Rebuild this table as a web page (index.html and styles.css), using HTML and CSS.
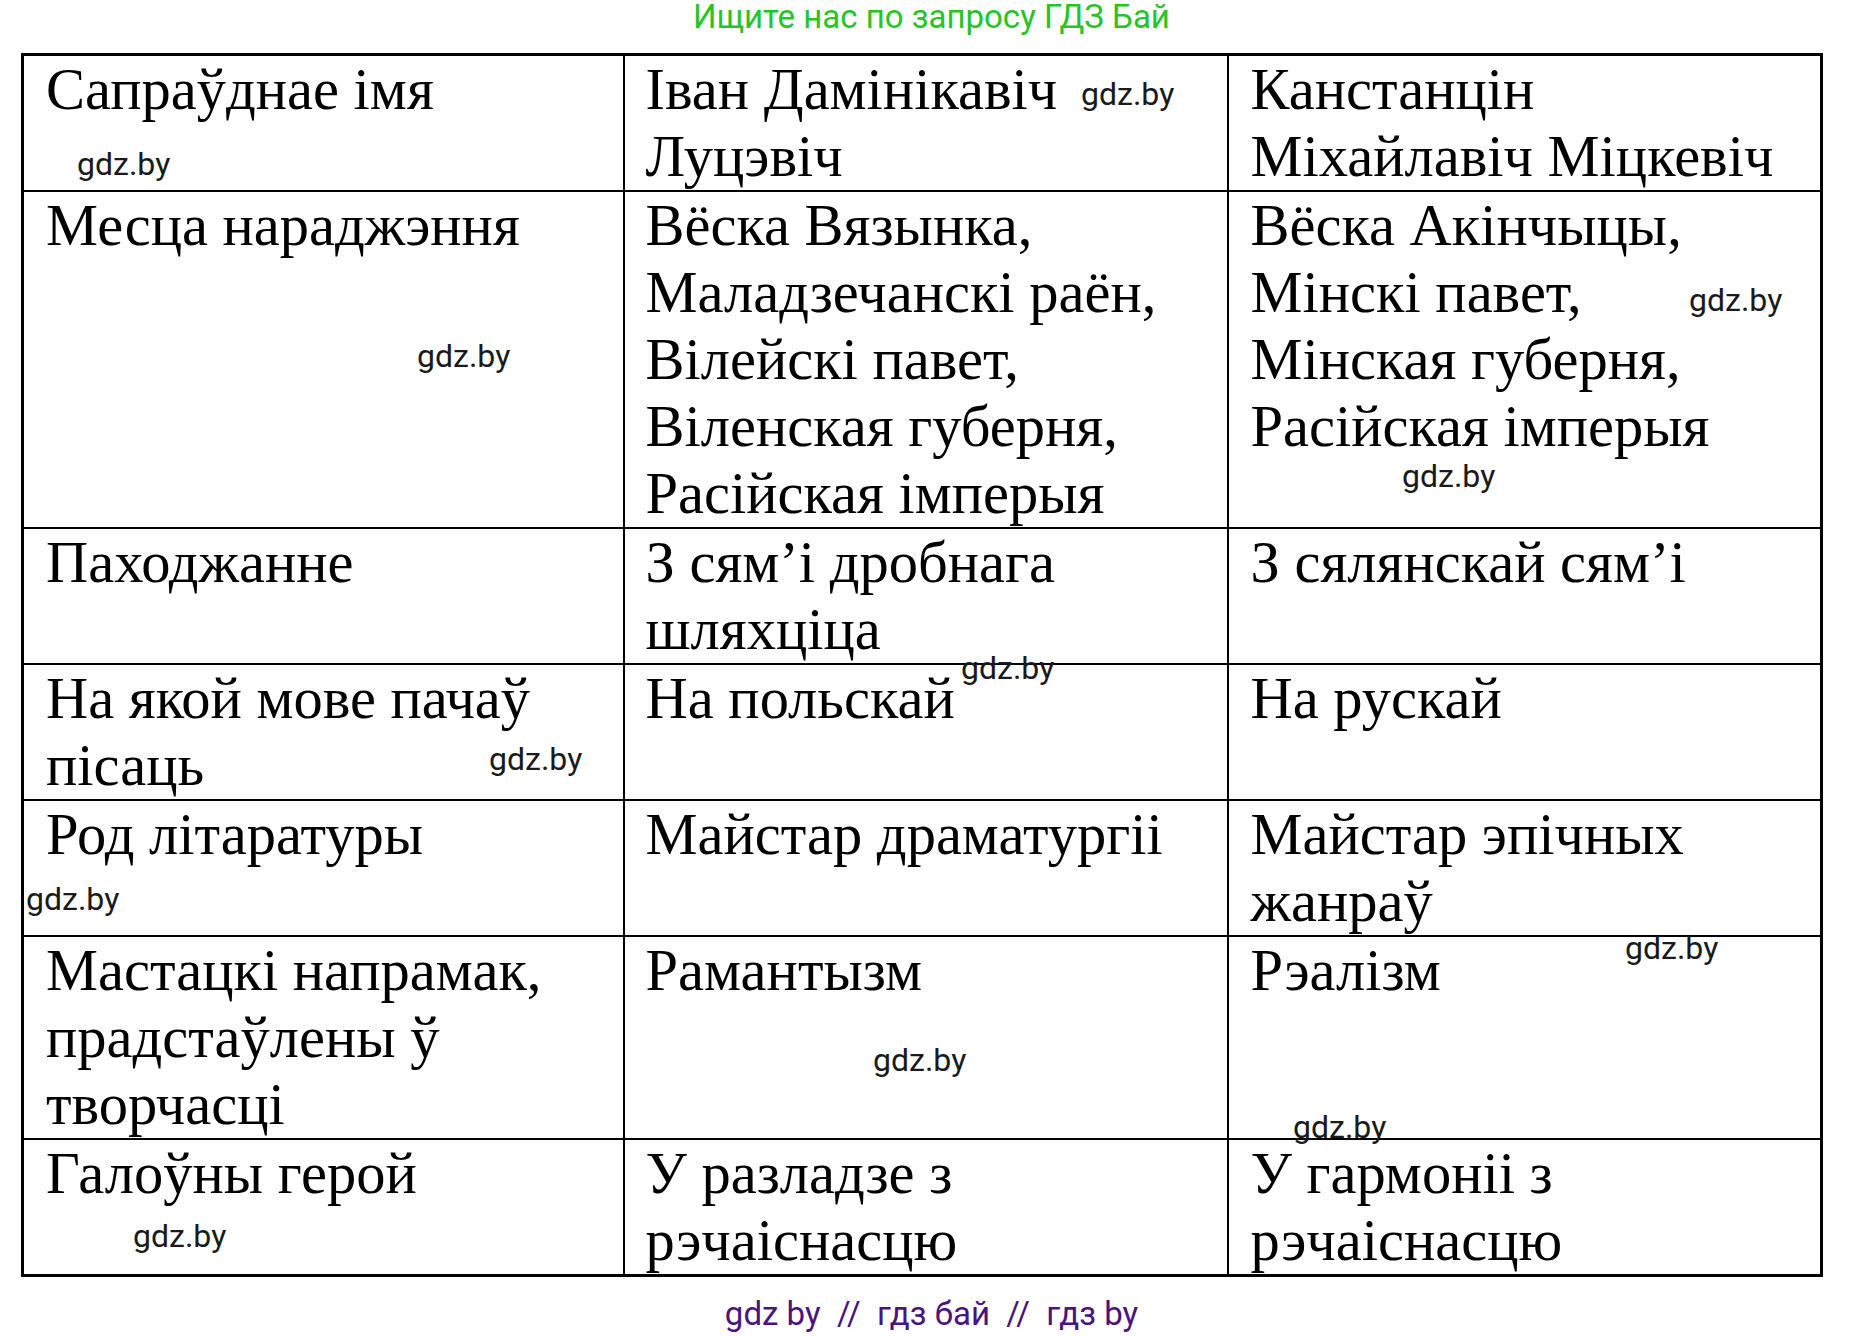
FILE: index.html
```html
<!DOCTYPE html>
<html lang="be">
<head>
<meta charset="utf-8">
<title>ГДЗ</title>
<link rel="stylesheet" href="styles.css">
</head>
<body>
<div class="page">
  <header class="top-note">Ищите нас по запросу ГДЗ Бай</header>
  <table class="grid">
    <colgroup>
      <col class="c1"><col class="c2"><col class="c3">
    </colgroup>
    <tr>
      <td>Сапраўднае імя</td>
      <td>Іван Дамінікавіч<br>Луцэвіч</td>
      <td>Канстанцін<br>Міхайлавіч Міцкевіч</td>
    </tr>
    <tr>
      <td>Месца нараджэння</td>
      <td>Вёска Вязынка,<br>Маладзечанскі раён,<br>Вілейскі павет,<br>Віленская губерня,<br>Расійская імперыя</td>
      <td>Вёска Акінчыцы,<br>Мінскі павет,<br>Мінская губерня,<br>Расійская імперыя</td>
    </tr>
    <tr>
      <td>Паходжанне</td>
      <td>З сям’і дробнага<br>шляхціца</td>
      <td>З сялянскай сям’і</td>
    </tr>
    <tr>
      <td>На якой мове пачаў<br>пісаць</td>
      <td>На польскай</td>
      <td>На рускай</td>
    </tr>
    <tr>
      <td>Род літаратуры</td>
      <td>Майстар драматургіі</td>
      <td>Майстар эпічных<br>жанраў</td>
    </tr>
    <tr>
      <td>Мастацкі напрамак,<br>прадстаўлены ў<br>творчасці</td>
      <td>Рамантызм</td>
      <td>Рэалізм</td>
    </tr>
    <tr>
      <td>Галоўны герой</td>
      <td>У разладзе з<br>рэчаіснасцю</td>
      <td>У гармоніі з<br>рэчаіснасцю</td>
    </tr>
  </table>
  <footer class="bottom-note">gdz by  //  гдз бай  //  гдз by</footer>

  <span class="wm wm1">gdz.by</span>
  <span class="wm wm2">gdz.by</span>
  <span class="wm wm3">gdz.by</span>
  <span class="wm wm4">gdz.by</span>
  <span class="wm wm5">gdz.by</span>
  <span class="wm wm6">gdz.by</span>
  <span class="wm wm7">gdz.by</span>
  <span class="wm wm8">gdz.by</span>
  <span class="wm wm9">gdz.by</span>
  <span class="wm wm10">gdz.by</span>
  <span class="wm wm11">gdz.by</span>
  <span class="wm wm12">gdz.by</span>
</div>
</body>
</html>
```

FILE: styles.css
```css
html, body {
  margin: 0;
  padding: 0;
  background: #ffffff;
}

.page {
  position: relative;
  width: 1863px;
  height: 1337px;
  display: flex;
  flex-direction: column;
  align-items: flex-start;
}

.top-note {
  align-self: stretch;
  height: 53px;
  display: flex;
  justify-content: center;
  align-items: flex-start;
  font-family: Roboto, "Liberation Sans", sans-serif;
  font-size: 33px;
  line-height: 33px;
  color: #27c427;
  box-sizing: border-box;
}

.grid {
  margin-left: 21px;
  width: 1799px;
  border-collapse: collapse;
  table-layout: fixed;
  border: 3px solid #000;
}

.c1 { width: 601px; }
.c2 { width: 604px; }
.c3 { width: 594px; }

.grid td {
  border: 2px solid #000;
  padding: 0 0 0 22px;
  vertical-align: top;
  font-family: "Liberation Serif", "Times New Roman", serif;
  font-size: 58.5px;
  line-height: 67px;
  color: #000;
  white-space: nowrap;
}

.grid td:nth-child(2) {
  padding-left: 21px;
}

.bottom-note {
  align-self: stretch;
  margin-top: 18px;
  text-align: center;
  white-space: pre;
  font-family: Roboto, "Liberation Sans", sans-serif;
  font-size: 33px;
  line-height: 38px;
  color: #4a1480;
}

.wm {
  position: absolute;
  font-family: Roboto, "Liberation Sans", sans-serif;
  font-size: 32px;
  line-height: 32px;
  color: #1a1a1a;
  white-space: nowrap;
}

.wm1 { left: 77px; top: 148px; }
.wm2 { left: 1081px; top: 78px; }
.wm3 { left: 417px; top: 340px; }
.wm4 { left: 1689px; top: 284px; }
.wm5 { left: 1402px; top: 460px; }
.wm6 { left: 961px; top: 652px; }
.wm7 { left: 489px; top: 743px; }
.wm8 { left: 26px; top: 883px; }
.wm9 { left: 1625px; top: 932px; }
.wm10 { left: 873px; top: 1044px; }
.wm11 { left: 1293px; top: 1111px; }
.wm12 { left: 133px; top: 1220px; }
```
